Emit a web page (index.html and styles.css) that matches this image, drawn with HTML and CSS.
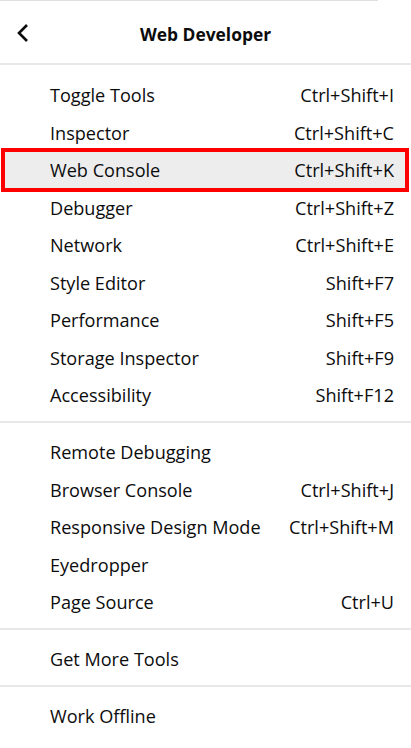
FILE: index.html
```html
<!DOCTYPE html>
<html>
<head>
<meta charset="utf-8">
<link rel="stylesheet" href="styles.css">
</head>
<body>
<div class="panel">
  <div class="topline"></div>
  <header class="header">
    <button class="back" aria-label="Back">
      <svg width="14" height="20" viewBox="0 0 14 20"><path d="M11 2 L3 10 L11 18" fill="none" stroke="#0c0c0d" stroke-width="2.6" stroke-linecap="butt" stroke-linejoin="miter"/></svg>
    </button>
    <h1 class="title">Web Developer</h1>
  </header>
  <div class="sep first"></div>
  <ul class="menu">
    <li class="item"><span>Toggle Tools</span><span class="key">Ctrl+Shift+I</span></li>
    <li class="item"><span>Inspector</span><span class="key">Ctrl+Shift+C</span></li>
    <li class="item active"><span>Web Console</span><span class="key">Ctrl+Shift+K</span></li>
    <li class="item"><span>Debugger</span><span class="key">Ctrl+Shift+Z</span></li>
    <li class="item"><span>Network</span><span class="key">Ctrl+Shift+E</span></li>
    <li class="item"><span>Style Editor</span><span class="key">Shift+F7</span></li>
    <li class="item"><span>Performance</span><span class="key">Shift+F5</span></li>
    <li class="item"><span>Storage Inspector</span><span class="key">Shift+F9</span></li>
    <li class="item"><span>Accessibility</span><span class="key">Shift+F12</span></li>
  </ul>
  <div class="sep"></div>
  <ul class="menu">
    <li class="item"><span>Remote Debugging</span></li>
    <li class="item"><span>Browser Console</span><span class="key">Ctrl+Shift+J</span></li>
    <li class="item"><span>Responsive Design Mode</span><span class="key">Ctrl+Shift+M</span></li>
    <li class="item"><span>Eyedropper</span></li>
    <li class="item"><span>Page Source</span><span class="key">Ctrl+U</span></li>
  </ul>
  <div class="sep"></div>
  <ul class="menu">
    <li class="item"><span>Get More Tools</span></li>
  </ul>
  <div class="sep"></div>
  <ul class="menu">
    <li class="item"><span>Work Offline</span></li>
  </ul>
</div>
</body>
</html>
```
FILE: styles.css
```css
* { box-sizing: border-box; }
html, body { margin: 0; padding: 0; background: #fff; }
body {
  font-family: "Open Sans", "Noto Sans", sans-serif;
  color: #0c0c0d;
  overflow: hidden;
}
.panel {
  width: 411px;
  position: relative;
}
.topline {
  height: 1px;
  width: 378px;
  background: #e0e0e0;
}
.header {
  height: 62px;
  display: flex;
  align-items: center;
  justify-content: center;
  position: relative;
}
.back {
  position: absolute;
  left: 16px;
  top: 22px;
  border: 0;
  background: none;
  padding: 0;
  width: 14px;
  height: 20px;
  display: flex;
}
.title {
  margin: 0;
  font-size: 17.4px;
  font-weight: 700;
  padding-top: 4px;
}
.sep {
  height: 2px;
  background: #e8e8e8;
  margin: 7.25px 0 10.25px;
}
.sep.first { margin: 0 0 11.25px; }
.menu {
  list-style: none;
  margin: 0;
  padding: 0;
}
.item {
  height: 37.5px;
  display: flex;
  align-items: center;
  justify-content: space-between;
  padding: 0 17px 0 50px;
  font-size: 18.1px;
  position: relative;
}
.item.active::before {
  content: "";
  position: absolute;
  left: 1px;
  right: 2px;
  top: -3.25px;
  bottom: -3.25px;
  background: #ededed;
  border: 4px solid #ff0000;
  z-index: -1;
}
.item.active { z-index: 0; }
.key { text-align: right; }
```
